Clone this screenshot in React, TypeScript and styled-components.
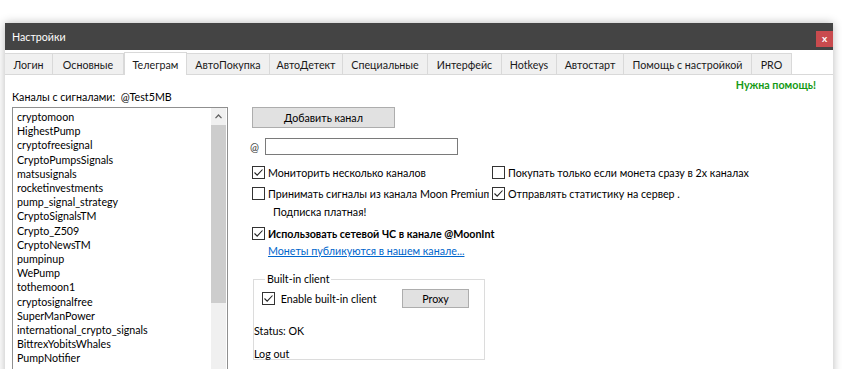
import React from "react";
import styled, { createGlobalStyle } from "styled-components";

const GlobalStyle = createGlobalStyle`
    html, body {
        margin: 0;
        padding: 0;
        background: #ffffff;
        overflow: hidden;
    }
    body {
        font-family: Lato, "Open Sans", sans-serif;
        font-size: 10.7px;
        color: #000000;
    }
`;

const Window = styled.div`
    margin: 23px 0 0 5px;
    width: 828px;
    height: 360px;
    background: #ffffff;
    box-shadow: 0 0 9px rgba(0, 0, 0, 0.28);
    display: flex;
    flex-direction: column;
`;

const TitleBar = styled.div`
    height: 27px;
    background: #444444;
    color: #ffffff;
    display: flex;
    align-items: flex-start;
    justify-content: space-between;
`;

const Title = styled.span`
    line-height: 27px;
    padding-left: 7px;
`;

const CloseButton = styled.div`
    margin-top: 8px;
    width: 17px;
    height: 16px;
    background: #c94b4e;
    color: #ffffff;
    font-size: 10px;
    font-weight: 700;
    line-height: 15px;
    text-align: center;
`;

const TabStrip = styled.div`
    height: 25px;
    display: flex;
    align-items: flex-end;
    border-bottom: 1px solid #d9d9d9;
    box-sizing: border-box;
`;

const Tab = styled.div<{ $w: number; $active?: boolean }>`
    width: ${(p) => p.$w}px;
    height: ${(p) => (p.$active ? 23 : 21)}px;
    box-sizing: border-box;
    border: 1px solid #d9d9d9;
    border-left: ${(p) => (p.$active ? "1px solid #d9d9d9" : "none")};
    border-bottom: none;
    background: ${(p) => (p.$active ? "#ffffff" : "#f0f0f0")};
    margin-bottom: ${(p) => (p.$active ? -1 : 0)}px;
    display: flex;
    align-items: center;
    justify-content: center;
    white-space: nowrap;
    color: #1a1a1a;
    &:first-child {
        border-left: none;
    }
`;

const Content = styled.div`
    flex: 1;
    display: flex;
`;

const LeftCol = styled.div`
    width: 216px;
    margin-left: 7px;
`;

const ChannelsLabel = styled.div`
    margin-top: 14px;
    line-height: 16px;
    white-space: nowrap;
`;

const ListBox = styled.div`
    margin-top: 2px;
    height: 270px;
    border: 1px solid #8f8f8f;
    box-sizing: border-box;
    display: flex;
    overflow: hidden;
`;

const ListItems = styled.div`
    flex: 1;
    padding: 2px 0 0 4px;
`;

const ListItem = styled.div`
    line-height: 14.2px;
    white-space: nowrap;
`;

const ScrollBar = styled.div`
    width: 15px;
    background: #f0f0f0;
    display: flex;
    flex-direction: column;
    margin-right: 1px;
`;

const ScrollArrow = styled.div`
    height: 17px;
    display: flex;
    align-items: center;
    justify-content: center;
`;

const ScrollThumb = styled.div`
    height: 178px;
    background: #cdcdcd;
`;

const RightCol = styled.div`
    flex: 1;
    margin-left: 24px;
    display: flex;
    flex-direction: column;
`;

const HelpRow = styled.div`
    margin-top: 3px;
    line-height: 14px;
    text-align: right;
    padding-right: 17px;
    color: #159a15;
    font-weight: 700;
`;

const PushButton = styled.button<{ $w: number; $h: number }>`
    width: ${(p) => p.$w}px;
    height: ${(p) => p.$h}px;
    background: #e1e1e1;
    border: 1px solid #adadad;
    font-family: inherit;
    font-size: inherit;
    color: #000;
    padding: 0;
`;

const AddButton = styled(PushButton)`
    margin-top: 15px;
`;

const AtRow = styled.div`
    margin-top: 10px;
    display: flex;
    align-items: center;
    margin-left: -2px;
`;

const AtSign = styled.span`
    width: 15px;
    color: #333;
`;

const TextInput = styled.div`
    width: 193px;
    height: 17px;
    border: 1px solid #7a7a7a;
    box-sizing: border-box;
`;

const OptionGrid = styled.div`
    margin-top: 7px;
    display: grid;
    grid-template-columns: 240px auto;
    row-gap: 1px;
`;

const CheckRow = styled.div<{ $bold?: boolean }>`
    height: 20px;
    display: flex;
    align-items: center;
    font-weight: ${(p) => (p.$bold ? 700 : 400)};
    white-space: nowrap;
`;

const CheckLabel = styled.span<{ $clip?: number }>`
    margin-left: 3px;
    ${(p) => (p.$clip ? `width: ${p.$clip}px; overflow: hidden;` : "")}
`;

const Note = styled.div`
    grid-column: 1 / 3;
    padding-left: 21px;
    line-height: 16px;
    margin-bottom: 2px;
`;

const WideRow = styled.div`
    grid-column: 1 / 3;
`;

const LinkText = styled.a`
    display: block;
    padding-left: 16px;
    line-height: 15px;
    color: #0066cc;
    text-decoration: underline;
`;

const GroupBox = styled.fieldset`
    margin: 13px 0 0 1px;
    width: 232px;
    height: 89px;
    box-sizing: border-box;
    border: 1px solid #dcdcdc;
    padding: 0;
`;

const GroupLegend = styled.legend`
    margin-left: 11px;
    padding: 0 2px;
    line-height: 16px;
`;

const ClientRow = styled.div`
    margin-top: 1px;
    padding-left: 8px;
    height: 21px;
    display: flex;
    align-items: center;
`;

const ClientCheck = styled.div`
    width: 140px;
    display: flex;
    align-items: center;
    white-space: nowrap;
`;

const StatusLine = styled.div<{ $gap: number }>`
    margin-top: ${(p) => p.$gap}px;
    line-height: 16px;
`;

const Box = styled.span`
    width: 13px;
    height: 13px;
    flex: none;
    display: inline-flex;
`;

const CheckBox = ({ checked }: { checked?: boolean }) => (
    <Box>
        <svg width="13" height="13" viewBox="0 0 13 13">
            <rect x="0.5" y="0.5" width="12" height="12" fill="#fff" stroke="#333" />
            {checked && (
                <path d="M2.5 6.5 L5.2 9.2 L10.5 3.5" fill="none" stroke="#222" strokeWidth="1.1" />
            )}
        </svg>
    </Box>
);

const tabs = [
    { label: "Логин", w: 48 },
    { label: "Основные", w: 71 },
    { label: "Телеграм", w: 63, active: true },
    { label: "АвтоПокупка", w: 83 },
    { label: "АвтоДетект", w: 73 },
    { label: "Специальные", w: 85 },
    { label: "Интерфейс", w: 74 },
    { label: "Hotkeys", w: 55 },
    { label: "Автостарт", w: 67 },
    { label: "Помощь с настройкой", w: 128 },
    { label: "PRO", w: 40 },
];

const channels = [
    "cryptomoon",
    "HighestPump",
    "cryptofreesignal",
    "CryptoPumpsSignals",
    "matsusignals",
    "rocketinvestments",
    "pump_signal_strategy",
    "CryptoSignalsTM",
    "Crypto_Z509",
    "CryptoNewsTM",
    "pumpinup",
    "WePump",
    "tothemoon1",
    "cryptosignalfree",
    "SuperManPower",
    "international_crypto_signals",
    "BittrexYobitsWhales",
    "PumpNotifier",
];

const App = () => {
    return (
        <>
            <GlobalStyle />
            <Window>
                <TitleBar>
                    <Title>Настройки</Title>
                    <CloseButton>x</CloseButton>
                </TitleBar>
                <TabStrip>
                    {tabs.map((t) => (
                        <Tab key={t.label} $w={t.w} $active={t.active}>
                            {t.label}
                        </Tab>
                    ))}
                </TabStrip>
                <Content>
                    <LeftCol>
                        <ChannelsLabel>Каналы с сигналами:&nbsp; @Test5MB</ChannelsLabel>
                        <ListBox>
                            <ListItems>
                                {channels.map((c) => (
                                    <ListItem key={c}>{c}</ListItem>
                                ))}
                            </ListItems>
                            <ScrollBar>
                                <ScrollArrow>
                                    <svg width="7" height="5" viewBox="0 0 7 5">
                                        <path d="M0.5 4.2 L3.5 1 L6.5 4.2" fill="none" stroke="#606060" strokeWidth="1.2" />
                                    </svg>
                                </ScrollArrow>
                                <ScrollThumb />
                            </ScrollBar>
                        </ListBox>
                    </LeftCol>
                    <RightCol>
                        <HelpRow>Нужна помощь!</HelpRow>
                        <AddButton $w={143} $h={21}>Добавить канал</AddButton>
                        <AtRow>
                            <AtSign>@</AtSign>
                            <TextInput />
                        </AtRow>
                        <OptionGrid>
                            <CheckRow>
                                <CheckBox checked />
                                <CheckLabel>Мониторить несколько каналов</CheckLabel>
                            </CheckRow>
                            <CheckRow>
                                <CheckBox />
                                <CheckLabel>Покупать только если монета сразу в 2х каналах</CheckLabel>
                            </CheckRow>
                            <CheckRow>
                                <CheckBox />
                                <CheckLabel $clip={221}>Принимать сигналы из канала Moon Premium</CheckLabel>
                            </CheckRow>
                            <CheckRow>
                                <CheckBox checked />
                                <CheckLabel>Отправлять статистику на сервер .</CheckLabel>
                            </CheckRow>
                            <Note>Подписка платная!</Note>
                            <WideRow>
                                <CheckRow $bold>
                                    <CheckBox checked />
                                    <CheckLabel>Использовать сетевой ЧС в канале @MoonInt</CheckLabel>
                                </CheckRow>
                                <LinkText>Монеты публикуются в нашем канале...</LinkText>
                            </WideRow>
                        </OptionGrid>
                        <GroupBox>
                            <GroupLegend>Built-in client</GroupLegend>
                            <ClientRow>
                                <ClientCheck>
                                    <CheckBox checked />
                                    <CheckLabel>&nbsp;Enable built-in client</CheckLabel>
                                </ClientCheck>
                                <PushButton $w={67} $h={19}>Proxy</PushButton>
                            </ClientRow>
                            <StatusLine $gap={14}>Status: OK</StatusLine>
                            <StatusLine $gap={7}>Log out</StatusLine>
                        </GroupBox>
                    </RightCol>
                </Content>
            </Window>
        </>
    );
};

export default App;
